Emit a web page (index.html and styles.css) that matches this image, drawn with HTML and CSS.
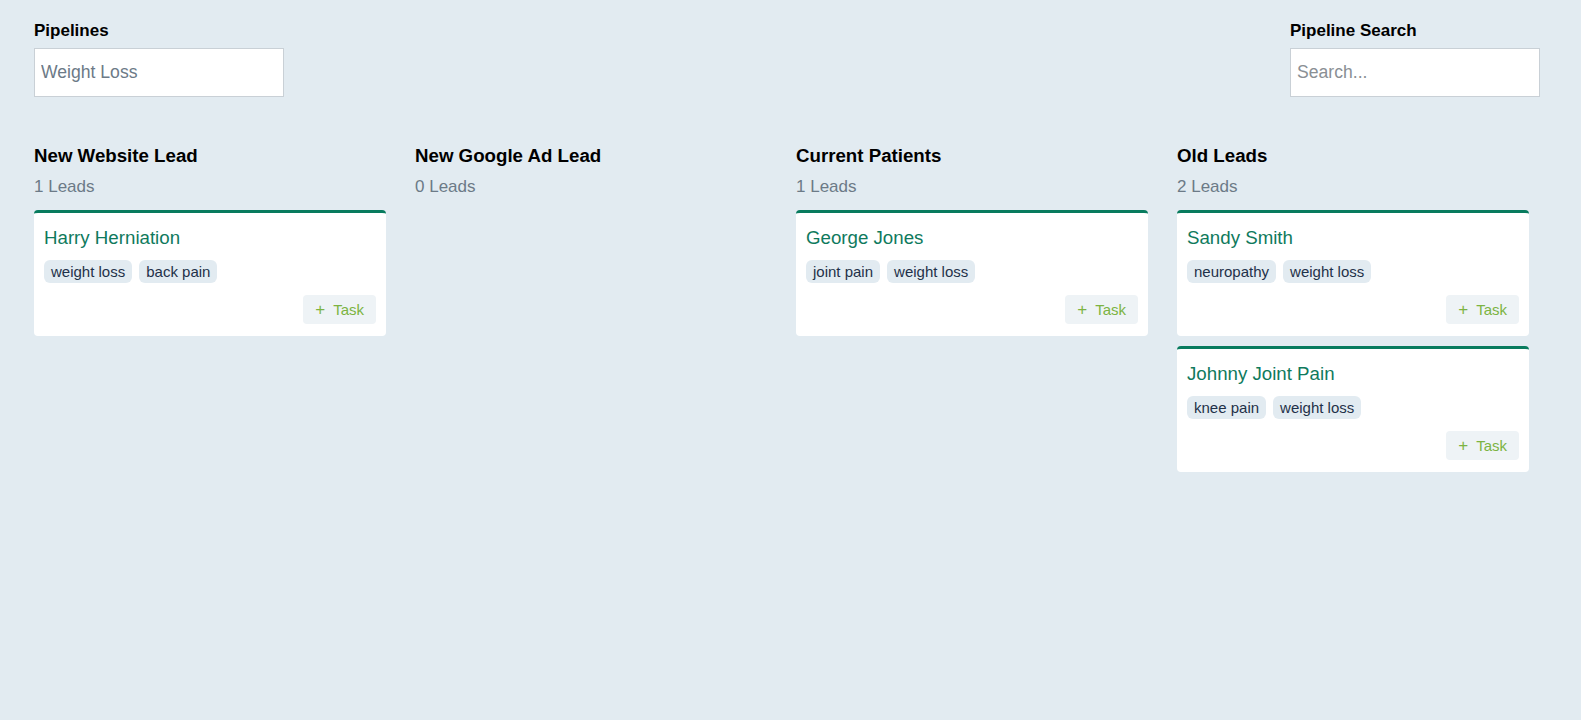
FILE: index.html
```html
<!DOCTYPE html>
<html lang="en">
<head>
    <meta charset="UTF-8">
    <meta name="viewport" content="width=device-width, initial-scale=1.0">
    <title>Pipelines</title>
    <link rel="stylesheet" href="styles.css">
</head>
<body>
    <div class="page">
        <div class="toolbar">
            <div class="field">
                <label class="field-label">Pipelines</label>
                <input class="field-input" type="text" value="Weight Loss">
            </div>
            <div class="field">
                <label class="field-label">Pipeline Search</label>
                <input class="field-input" type="text" placeholder="Search...">
            </div>
        </div>

        <div class="board">
            <div class="column">
                <h2 class="column-title">New Website Lead</h2>
                <p class="column-count">1 Leads</p>
                <div class="card">
                    <div class="card-name">Harry Herniation</div>
                    <div class="tags">
                        <span class="tag">weight loss</span>
                        <span class="tag">back pain</span>
                    </div>
                    <div class="card-actions">
                        <button class="task-button"><span class="plus">+</span> Task</button>
                    </div>
                </div>
            </div>

            <div class="column">
                <h2 class="column-title">New Google Ad Lead</h2>
                <p class="column-count">0 Leads</p>
            </div>

            <div class="column">
                <h2 class="column-title">Current Patients</h2>
                <p class="column-count">1 Leads</p>
                <div class="card">
                    <div class="card-name">George Jones</div>
                    <div class="tags">
                        <span class="tag">joint pain</span>
                        <span class="tag">weight loss</span>
                    </div>
                    <div class="card-actions">
                        <button class="task-button"><span class="plus">+</span> Task</button>
                    </div>
                </div>
            </div>

            <div class="column">
                <h2 class="column-title">Old Leads</h2>
                <p class="column-count">2 Leads</p>
                <div class="card">
                    <div class="card-name">Sandy Smith</div>
                    <div class="tags">
                        <span class="tag">neuropathy</span>
                        <span class="tag">weight loss</span>
                    </div>
                    <div class="card-actions">
                        <button class="task-button"><span class="plus">+</span> Task</button>
                    </div>
                </div>
                <div class="card">
                    <div class="card-name">Johnny Joint Pain</div>
                    <div class="tags">
                        <span class="tag">knee pain</span>
                        <span class="tag">weight loss</span>
                    </div>
                    <div class="card-actions">
                        <button class="task-button"><span class="plus">+</span> Task</button>
                    </div>
                </div>
            </div>
        </div>
    </div>
</body>
</html>
```

FILE: styles.css
```css
body {
    margin: 0;
    font-family: "Liberation Sans", Arial, sans-serif;
    background-color: #e2ebf1;
    color: #000;
}
.page {
    padding: 21px 41px 0 34px;
}
.toolbar {
    display: flex;
    justify-content: space-between;
}
.field {
    display: flex;
    flex-direction: column;
}
.field-label {
    font-size: 17px;
    font-weight: bold;
    line-height: 19px;
    margin-bottom: 8px;
}
.field-input {
    box-sizing: border-box;
    width: 250px;
    height: 49px;
    padding: 0 6px;
    border: 1px solid #c9d0d6;
    border-radius: 0;
    background: #fff;
    font-family: inherit;
    font-size: 17.6px;
    color: #6c7a87;
    outline: none;
}
.field-input::placeholder {
    color: #8a8f94;
}
.board {
    display: flex;
    gap: 29px;
    margin-top: 48px;
    align-items: flex-start;
}
.column {
    width: 352px;
    flex-shrink: 0;
    display: flex;
    flex-direction: column;
    gap: 10px;
}
.column-title {
    margin: 0;
    font-size: 18.7px;
    font-weight: bold;
    line-height: 22px;
}
.column-count {
    margin: 0 0 3px 0;
    font-size: 17px;
    line-height: 20px;
    color: #6c7a87;
}
.card {
    background: #fff;
    border-top: 3px solid #087b5e;
    border-radius: 4px;
    padding: 14px 10px 12px 10px;
}
.card-name {
    font-size: 18.7px;
    line-height: 22px;
    color: #0f7a5d;
}
.tags {
    display: flex;
    gap: 7px;
    margin-top: 11px;
}
.tag {
    background: #e2ebf1;
    border-radius: 6px;
    padding: 0 7px;
    height: 23px;
    line-height: 23px;
    font-size: 15px;
    color: #1f3149;
}
.card-actions {
    display: flex;
    justify-content: flex-end;
    margin-top: 12px;
}
.task-button {
    border: none;
    background: #eef3f6;
    border-radius: 4px;
    height: 29px;
    padding: 0 12px;
    font-family: inherit;
    font-size: 15px;
    color: #7cb342;
    cursor: pointer;
}
.plus {
    font-size: 17px;
    margin-right: 4px;
}
```
